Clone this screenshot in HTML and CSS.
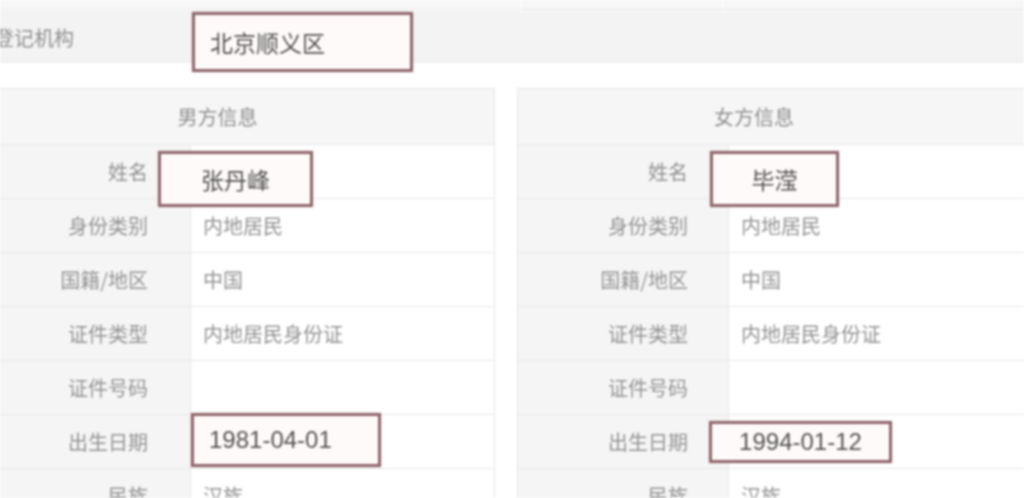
FILE: index.html
```html
<!DOCTYPE html>
<html lang="zh-CN">
<head>
<meta charset="utf-8">
<title>婚姻登记信息</title>
<link rel="stylesheet" href="styles.css">
</head>
<body>
<div class="page">
  <div class="top-strip">
    <div class="ts-cell ts-a"></div>
    <div class="ts-cell ts-b"></div>
    <div class="ts-cell ts-c"></div>
  </div>
  <div class="reg-row">
    <div class="reg-label">登记机构</div>
    <div class="reg-value">
      <div class="mark mark-reg">北京顺义区</div>
    </div>
  </div>
  <div class="panels">
    <section class="panel panel-left">
      <div class="panel-head">男方信息</div>
      <div class="row"><div class="lab">姓名</div><div class="val"><div class="mark mark-name-l">张丹峰</div></div></div>
      <div class="row"><div class="lab">身份类别</div><div class="val">内地居民</div></div>
      <div class="row"><div class="lab">国籍/地区</div><div class="val">中国</div></div>
      <div class="row"><div class="lab">证件类型</div><div class="val">内地居民身份证</div></div>
      <div class="row"><div class="lab">证件号码</div><div class="val"></div></div>
      <div class="row"><div class="lab">出生日期</div><div class="val"><div class="mark mark-date-l">1981-04-01</div></div></div>
      <div class="row"><div class="lab">民族</div><div class="val">汉族</div></div>
    </section>
    <section class="panel panel-right">
      <div class="panel-head panel-head-r">女方信息</div>
      <div class="row"><div class="lab">姓名</div><div class="val"><div class="mark mark-name-r">毕滢</div></div></div>
      <div class="row"><div class="lab">身份类别</div><div class="val">内地居民</div></div>
      <div class="row"><div class="lab">国籍/地区</div><div class="val">中国</div></div>
      <div class="row"><div class="lab">证件类型</div><div class="val">内地居民身份证</div></div>
      <div class="row"><div class="lab">证件号码</div><div class="val"></div></div>
      <div class="row"><div class="lab">出生日期</div><div class="val"><div class="mark mark-date-r">1994-01-12</div></div></div>
      <div class="row"><div class="lab">民族</div><div class="val">汉族</div></div>
    </section>
  </div>
</div>
</body>
</html>
```
FILE: styles.css
```css
html, body {
  margin: 0;
  padding: 0;
  background: #ffffff;
}
body {
  width: 1024px;
  height: 498px;
  overflow: hidden;
  font-family: "Noto Sans CJK SC", "Noto Sans", sans-serif;
}
.page {
  width: 1024px;
  height: 498px;
  overflow: hidden;
  filter: blur(0.8px);
}
.top-strip {
  height: 12px;
  display: flex;
  background: #f7f7f7;
}
.ts-cell {
  height: 9px;
  border-bottom: 1px solid #e4e4e4;
}
.ts-a { width: 520px; border-bottom-color: #eeeeee; }
.ts-b { width: 200px; border-left: 2px solid #fbfbfb; border-right: 2px solid #fbfbfb; }
.ts-c { flex: 1; }

.reg-row {
  height: 50px;
  background: #f3f3f3;
  display: flex;
  align-items: center;
  border-bottom: 1px solid #ededed;
}
.reg-label {
  width: 192px;
  margin-left: -6px;
  font-size: 20px;
  color: #8f8f8f;
  flex: none;
}
.reg-value {
  position: relative;
  align-self: stretch;
  flex: 1;
}

.mark {
  position: absolute;
  z-index: 2;
  box-sizing: border-box;
  border: 3px solid #8e666c;
  background: #fffafa;
  display: flex;
  align-items: center;
  font-size: 23px;
  color: #525252;
  white-space: nowrap;
  box-shadow: 0 0 2px rgba(200, 130, 140, 0.35);
}
.mark-reg {
  top: 0;
  left: 6px;
  width: 221px;
  height: 60px;
  padding-left: 15px;
}
.mark-name-l {
  top: 6px;
  left: -33px;
  width: 155px;
  height: 56px;
  justify-content: center;
}
.mark-name-r {
  top: 6px;
  left: -19px;
  width: 129px;
  height: 56px;
  justify-content: center;
}
.mark-date-l {
  top: -2px;
  left: 0;
  width: 190px;
  height: 54px;
  padding-left: 15px;
  font-family: "Liberation Sans", "Noto Sans", sans-serif;
  font-size: 24px;
}
.mark-date-r {
  top: 6px;
  left: -20px;
  width: 183px;
  height: 42px;
  justify-content: center;
  font-family: "Liberation Sans", "Noto Sans", sans-serif;
  font-size: 24px;
}

.panels {
  display: flex;
  margin-top: 25px;
}
.panel {
  flex: none;
  box-sizing: border-box;
  border: 1px solid #e6e6e6;
  background: #ffffff;
}
.panel-left {
  width: 555px;
  margin-left: -60px;
  --lab: 249px;
  --pad: 42px;
}
.panel-right {
  width: 560px;
  margin-left: 22px;
  --lab: 210px;
  --pad: 40px;
}
.panel-head {
  height: 55px;
  background: #f6f6f6;
  display: flex;
  align-items: center;
  justify-content: center;
  font-size: 20px;
  color: #8f8f8f;
}
.panel-head-r {
  padding-right: 86px;
}
.row {
  height: 53px;
  display: grid;
  grid-template-columns: var(--lab) 1fr;
  border-top: 1px solid #e8e8e8;
}
.lab {
  background: #f5f5f5;
  display: flex;
  align-items: center;
  justify-content: flex-end;
  padding-right: var(--pad);
  font-size: 20px;
  color: #939393;
}
.val {
  position: relative;
  border-left: 1px solid #e8e8e8;
  display: flex;
  align-items: center;
  padding-left: 12px;
  font-size: 20px;
  color: #939393;
  background: #ffffff;
}
```
